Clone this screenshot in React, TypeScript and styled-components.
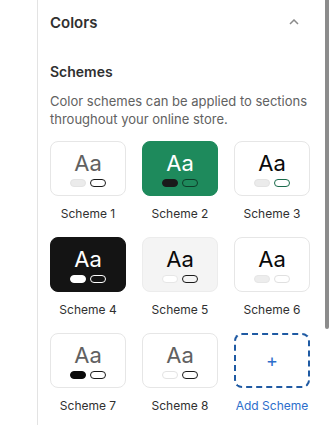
import styled, { createGlobalStyle } from 'styled-components';

const GlobalStyle = createGlobalStyle`
  html, body {
    margin: 0;
    padding: 0;
    background: #ffffff;
  }
  body {
    font-family: Inter, 'Noto Sans', 'Liberation Sans', sans-serif;
    color: #303030;
    overflow: hidden;
  }
`;

type Pill = { fill: string; border: string };
type Scheme = {
  name: string;
  bg: string;
  border: string;
  text: string;
  pills: [Pill, Pill];
};

const schemes: Scheme[] = [
  {
    name: 'Scheme 1',
    bg: '#ffffff',
    border: '#e6e6e6',
    text: '#616161',
    pills: [
      { fill: '#ebebeb', border: '#e3e3e3' },
      { fill: '#ffffff', border: '#1a1a1a' },
    ],
  },
  {
    name: 'Scheme 2',
    bg: '#1e8a5c',
    border: '#1e8a5c',
    text: '#ffffff',
    pills: [
      { fill: '#1a1a1a', border: '#1a1a1a' },
      { fill: '#1e8a5c', border: '#0e3d29' },
    ],
  },
  {
    name: 'Scheme 3',
    bg: '#ffffff',
    border: '#e6e6e6',
    text: '#0a0a0a',
    pills: [
      { fill: '#ebebeb', border: '#e3e3e3' },
      { fill: '#ffffff', border: '#1b6b4c' },
    ],
  },
  {
    name: 'Scheme 4',
    bg: '#141414',
    border: '#141414',
    text: '#ffffff',
    pills: [
      { fill: '#ffffff', border: '#ffffff' },
      { fill: '#141414', border: '#ffffff' },
    ],
  },
  {
    name: 'Scheme 5',
    bg: '#f4f4f4',
    border: '#ececec',
    text: '#0a0a0a',
    pills: [
      { fill: '#ffffff', border: '#e6e6e6' },
      { fill: '#f4f4f4', border: '#1a1a1a' },
    ],
  },
  {
    name: 'Scheme 6',
    bg: '#ffffff',
    border: '#e6e6e6',
    text: '#0a0a0a',
    pills: [
      { fill: '#ededed', border: '#e6e6e6' },
      { fill: '#ffffff', border: '#e0e0e0' },
    ],
  },
  {
    name: 'Scheme 7',
    bg: '#ffffff',
    border: '#e6e6e6',
    text: '#616161',
    pills: [
      { fill: '#0a0a0a', border: '#0a0a0a' },
      { fill: '#ffffff', border: '#1a1a1a' },
    ],
  },
  {
    name: 'Scheme 8',
    bg: '#ffffff',
    border: '#e6e6e6',
    text: '#616161',
    pills: [
      { fill: '#ffffff', border: '#e3e3e3' },
      { fill: '#ffffff', border: '#1a1a1a' },
    ],
  },
];

const App = () => {
  return (
    <>
      <GlobalStyle />
      <Page>
        <Sidebar />
        <Panel>
          <Header>
            <HeaderTitle>Colors</HeaderTitle>
            <Chevron viewBox="0 0 10 6" aria-hidden>
              <polyline points="1,5 5,1 9,5" />
            </Chevron>
          </Header>
          <SectionTitle>Schemes</SectionTitle>
          <Description>
            Color schemes can be applied to sections throughout your online store.
          </Description>
          <Grid>
            {schemes.map((s) => (
              <Item key={s.name}>
                <Card $bg={s.bg} $border={s.border}>
                  <Sample $color={s.text}>Aa</Sample>
                  <Pills>
                    {s.pills.map((p, i) => (
                      <Swatch key={i} $fill={p.fill} $border={p.border} />
                    ))}
                  </Pills>
                </Card>
                <Label>{s.name}</Label>
              </Item>
            ))}
            <Item>
              <AddCard type="button">+</AddCard>
              <Label $accent>Add Scheme</Label>
            </Item>
          </Grid>
        </Panel>
        <ScrollThumb />
      </Page>
    </>
  );
};

export default App;

const Page = styled.div`
  position: relative;
  display: flex;
  width: 329px;
  height: 425px;
  overflow: hidden;
`;

const Sidebar = styled.div`
  flex: 0 0 37px;
  border-right: 1px solid #e3e3e3;
`;

const Panel = styled.div`
  flex: 1;
  padding: 0 18px 0 12px;
`;

const Header = styled.div`
  display: flex;
  align-items: center;
  justify-content: space-between;
  height: 43px;
  padding: 1px 12px 0 0;
  box-sizing: border-box;
`;

const HeaderTitle = styled.div`
  font-size: 15px;
  font-weight: 600;
  color: #303030;
`;

const Chevron = styled.svg`
  width: 10px;
  height: 6px;
  fill: none;
  stroke: #8a8a8a;
  stroke-width: 1.5;
`;

const SectionTitle = styled.div`
  margin-top: 19px;
  font-size: 14px;
  font-weight: 600;
  line-height: 20px;
  color: #303030;
`;

const Description = styled.p`
  margin: 10px 0 0;
  font-size: 13px;
  line-height: 18px;
  color: #616161;
`;

const Grid = styled.div`
  display: grid;
  grid-template-columns: repeat(3, 76px);
  column-gap: 16px;
  row-gap: 14px;
  margin-top: 13px;
`;

const Item = styled.div`
  display: flex;
  flex-direction: column;
  align-items: center;
`;

const Card = styled.div<{ $bg: string; $border: string }>`
  box-sizing: border-box;
  display: flex;
  flex-direction: column;
  align-items: center;
  width: 76px;
  height: 55px;
  padding-top: 8px;
  border-radius: 8px;
  background: ${(p) => p.$bg};
  border: 1px solid ${(p) => p.$border};
`;

const Sample = styled.div<{ $color: string }>`
  font-size: 22px;
  line-height: 26px;
  color: ${(p) => p.$color};
`;

const Pills = styled.div`
  display: flex;
  gap: 4px;
  margin-top: 3px;
`;

const Swatch = styled.span<{ $fill: string; $border: string }>`
  box-sizing: border-box;
  width: 16px;
  height: 8px;
  border-radius: 4px;
  background: ${(p) => p.$fill};
  border: 1.5px solid ${(p) => p.$border};
`;

const AddCard = styled.button`
  box-sizing: border-box;
  display: flex;
  align-items: center;
  justify-content: center;
  width: 76px;
  height: 55px;
  padding: 0;
  border-radius: 8px;
  border: 2px dashed #1f5aa3;
  background: #ffffff;
  color: #2c6ecb;
  font-family: inherit;
  font-size: 18px;
  font-weight: 400;
`;

const Label = styled.div<{ $accent?: boolean }>`
  margin-top: 9px;
  font-size: 12px;
  line-height: 18px;
  color: ${(p) => (p.$accent ? '#2c6ecb' : '#303030')};
`;

const ScrollThumb = styled.div`
  position: absolute;
  top: 0;
  right: 0;
  width: 4px;
  height: 329px;
  border-radius: 0 0 3px 3px;
  background: #8c8c8c;
`;
